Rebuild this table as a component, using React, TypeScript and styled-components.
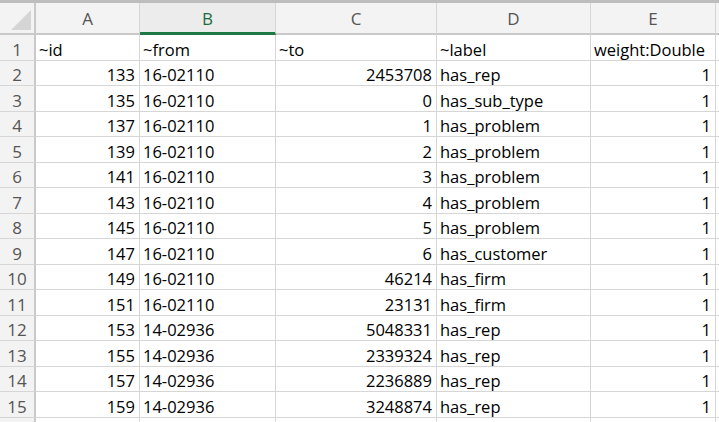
import React from "react";
import styled, { createGlobalStyle, css } from "styled-components";

const Global = createGlobalStyle`
  html, body { margin: 0; padding: 0; background: #ffffff; }
  body { font-family: "Open Sans", "Liberation Sans", sans-serif; overflow: hidden; }
`;

const Frame = styled.div`
  width: 719px;
  height: 422px;
  overflow: hidden;
  border-top: 3px solid #bdbdbd;
  box-sizing: border-box;
  background: #fff;
`;

const Sheet = styled.div`
  display: grid;
  grid-template-columns: 36px 104px 136px 161px 154px 125px 40px;
  grid-template-rows: 32px repeat(16, 25.5px);
  font-size: 16.5px;
  color: #000;
`;

const Corner = styled.div`
  background: #f3f3f3;
  border-right: 2px solid #c9c9c9;
  border-bottom: 2px solid #c9c9c9;
  box-sizing: border-box;
  display: flex;
  align-items: flex-end;
  justify-content: flex-end;
  padding: 0 3px 3px 0;
`;

const ColHead = styled.div<{ $selected?: boolean }>`
  background: #f3f3f3;
  box-sizing: border-box;
  border-right: 1px solid #d6d6d6;
  border-bottom: 2px solid #c9c9c9;
  display: flex;
  align-items: center;
  justify-content: center;
  color: #555;
  font-size: 17px;
  padding-top: 1px;
  ${(p) =>
    p.$selected &&
    css`
      color: #1d6b41;
      border-bottom: 3px solid #1d7a45;
      background: #ececec;
      padding-top: 2px;
    `}
`;

const RowHead = styled.div`
  background: #f3f3f3;
  box-sizing: border-box;
  border-right: 2px solid #c9c9c9;
  border-bottom: 1px solid #d6d6d6;
  display: flex;
  align-items: flex-end;
  justify-content: center;
  color: #555;
  font-size: 17px;
  line-height: 21px;
`;

const Cell = styled.div<{ $align?: "left" | "right" }>`
  box-sizing: border-box;
  border-right: 1px solid #d6d6d6;
  border-bottom: 1px solid #d6d6d6;
  display: flex;
  align-items: flex-end;
  justify-content: ${(p) => (p.$align === "right" ? "flex-end" : "flex-start")};
  padding: 0 4px 0 3px;
  line-height: 20px;
  white-space: nowrap;
  overflow: hidden;
`;

const Triangle = () => (
  <svg width="20" height="20" viewBox="0 0 20 20">
    <polygon points="20,0 20,20 0,20" fill="#d5d5d5" />
  </svg>
);

const rows: [number, string, number, string, number][] = [
  [133, "16-02110", 2453708, "has_rep", 1],
  [135, "16-02110", 0, "has_sub_type", 1],
  [137, "16-02110", 1, "has_problem", 1],
  [139, "16-02110", 2, "has_problem", 1],
  [141, "16-02110", 3, "has_problem", 1],
  [143, "16-02110", 4, "has_problem", 1],
  [145, "16-02110", 5, "has_problem", 1],
  [147, "16-02110", 6, "has_customer", 1],
  [149, "16-02110", 46214, "has_firm", 1],
  [151, "16-02110", 23131, "has_firm", 1],
  [153, "14-02936", 5048331, "has_rep", 1],
  [155, "14-02936", 2339324, "has_rep", 1],
  [157, "14-02936", 2236889, "has_rep", 1],
  [159, "14-02936", 3248874, "has_rep", 1],
];

export default function App() {
  return (
    <>
      <Global />
      <Frame>
        <Sheet>
          <Corner>
            <Triangle />
          </Corner>
          <ColHead>A</ColHead>
          <ColHead $selected>B</ColHead>
          <ColHead>C</ColHead>
          <ColHead>D</ColHead>
          <ColHead>E</ColHead>
          <ColHead />

          <RowHead>1</RowHead>
          <Cell>~id</Cell>
          <Cell>~from</Cell>
          <Cell>~to</Cell>
          <Cell>~label</Cell>
          <Cell>weight:Double</Cell>
          <Cell />

          {rows.map((r, i) => (
            <React.Fragment key={i}>
              <RowHead>{i + 2}</RowHead>
              <Cell $align="right">{r[0]}</Cell>
              <Cell>{r[1]}</Cell>
              <Cell $align="right">{r[2]}</Cell>
              <Cell>{r[3]}</Cell>
              <Cell $align="right">{r[4]}</Cell>
              <Cell />
            </React.Fragment>
          ))}

          <RowHead />
          <Cell />
          <Cell />
          <Cell />
          <Cell />
          <Cell />
          <Cell />
        </Sheet>
      </Frame>
    </>
  );
}
